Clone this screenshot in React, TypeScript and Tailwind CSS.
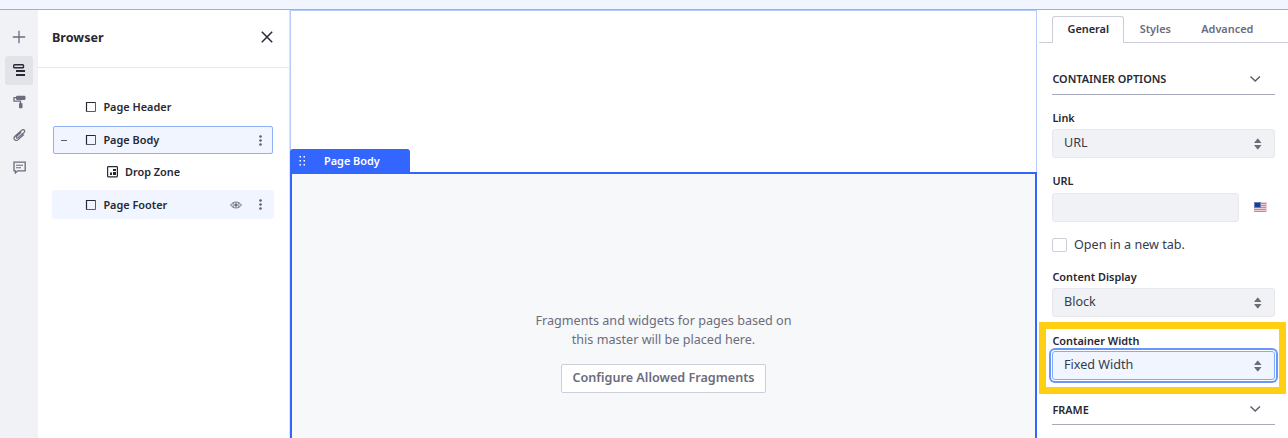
import React from "react";

const label = "text-[10.9px] font-semibold leading-[14px] text-[#272833] whitespace-nowrap";

function SquareIcon() {
  return (
    <svg width="12" height="12" viewBox="0 0 12 12" fill="none" className="block shrink-0">
      <path d="M1.500 11V1.500H11" stroke="#272833" strokeWidth="1.200" />
      <path d="M1 10.500h9.500V1" stroke="#5b5c6b" strokeWidth="1" />
    </svg>
  );
}

function Dots() {
  return (
    <svg width="4" height="12" viewBox="0 0 4 12" fill="#5c5d6e" className="block shrink-0">
      <circle cx="1.500" cy="1.500" r="1.300" />
      <circle cx="1.500" cy="5.500" r="1.300" />
      <circle cx="1.500" cy="9.500" r="1.300" />
    </svg>
  );
}

function Eye() {
  return (
    <svg width="12" height="8" viewBox="0 0 12 8" fill="none" stroke="#6b6c7e" className="block shrink-0">
      <path d="M.6 4C3 .1 9 .1 11.4 4 9 7.900 3 7.900.6 4Z" />
      <circle cx="6" cy="4" r="1.700" fill="#6b6c7e" stroke="none" />
      <path d="M3.700 2.200c-.9 1.200-.9 2.400 0 3.600M8.300 2.200c.9 1.200.9 2.400 0 3.600" strokeWidth=".8" />
    </svg>
  );
}

function Chevron() {
  return (
    <svg width="12" height="8" viewBox="0 0 12 8" fill="none" stroke="#5b5c6b" strokeWidth="1.400" className="block">
      <path d="m1.500 1.400 4.700 4.700 4.700-4.700" />
    </svg>
  );
}

function Select({ value, focused = false }: { value: string; focused?: boolean }) {
  return (
    <div
      className={
        "flex h-[29px] w-[223px] items-center justify-between rounded-[3px] border pl-[11px] pr-[12px] " +
        (focused
          ? "border-[#80acff] bg-[#f0f5ff] shadow-[0_0_0_1px_#ffffff,0_0_0_3px_#6b95f8]"
          : "border-[#e7e7ed] bg-[#f1f2f5]")
      }
    >
      <span className="pb-[2px] text-[12.6px] leading-[18px] text-[#393a4a]">{value}</span>
      <svg width="8" height="12" viewBox="0 0 8 12" fill="#6b6c7e" className="block">
        <path d="M0 5 3.200.9q.6-.7 1.200 0L7.500 5ZM0 7h7.500L4.400 11.100q-.6.7-1.200 0Z" />
      </svg>
    </div>
  );
}

function Section({ title, chevronTop = "pt-[3px]" }: { title: string; chevronTop?: string }) {
  return (
    <div className="flex h-[23px] w-[223px] justify-between border-b border-[#a7a9bc] pr-[14px]">
      <span className={label + " pl-[0.4px]"}>{title}</span>
      <span className={chevronTop}><Chevron /></span>
    </div>
  );
}

function Flag() {
  return (
    <svg width="13" height="10" viewBox="0 0 13 10" className="-mt-[2px] block">
      <path fill="#eccfd2" d="M0 0h13v10H0z" />
      <path fill="#d98288" d="M6 1h6v1H6zM6 3h6v1H6zM6 5h6v1H6zM0 7h12v1H0zM0 9h12v1H0z" />
      <path fill="#6c7fb5" d="M0 0h7v6H0z" />
      <path fill="#173d94" d="M1 1h5v4H1z" />
    </svg>
  );
}

function Rail() {
  return (
    <nav className="flex w-[38px] shrink-0 flex-col items-center bg-[#f1f2f5] pt-[13px] text-[#6b6c7e]">
      <div className="flex h-7 w-7 items-center justify-center">
        <svg width="14" height="14" viewBox="0 0 14 14" stroke="currentColor" strokeWidth="1.300"><path d="M7 .8v12.400M.8 7h12.400" /></svg>
      </div>
      <div className="mt-[5px] flex h-[29px] w-7 items-center justify-center rounded-[3px] bg-[#e2e3e8] pb-px">
        <svg width="12" height="12" viewBox="0 0 12 12" fill="none" stroke="#272833">
          <rect x=".7" y=".7" width="9.800" height="3" rx=".8" strokeWidth="1.400" />
          <path d="M3 7H12M3 11H12" strokeWidth="2" />
        </svg>
      </div>
      <div className="mt-[3px] flex h-7 w-7 items-center justify-center">
        <svg width="13" height="14" viewBox="0 0 13 14" fill="none" stroke="currentColor">
          <rect x="3" y=".8" width="9.500" height="4.200" rx="1.200" fill="currentColor" stroke="none" />
          <path d="M3.500 2.600H1v3.600h6.500V9" strokeWidth="1.300" />
          <path d="M6 8.300h3.500v4.500q-1.700 1-3.500 0z" fill="currentColor" stroke="none" />
        </svg>
      </div>
      <div className="mt-[5px] flex h-7 w-7 items-center justify-center">
        <svg width="13" height="12" viewBox="0 0 13 12" fill="none" stroke="currentColor" strokeWidth="1.200" strokeLinecap="round">
          <path d="m7.900 3.600-4.200 3.700c-1.100 1 .2 2.400 1.300 1.500l5.800-5.100C12.700 2 10.900-.4 8.800 1.200L2.200 7C-.8 9.700 2.400 13 5.200 10.600L10.600 5.800" />
        </svg>
      </div>
      <div className="mt-[4px] flex h-7 w-7 items-center justify-center">
        <svg width="13" height="13" viewBox="0 0 13 13" fill="none" stroke="currentColor" strokeWidth="1.300">
          <path d="M1 1.100h11.200v8.800H4.600L2.400 12V9.900H1z" />
          <path d="M3 4.200h7M3 6.700h5" strokeWidth="1.100" />
        </svg>
      </div>
    </nav>
  );
}

function Browser() {
  const row = "flex items-center ";
  return (
    <aside className="w-[252px] shrink-0 border-r border-[#e2e4ea] bg-white">
      <header className="flex h-[58px] items-center justify-between border-b border-[#e7e7ed] pl-[14px] pr-[16px] pb-[3px]">
        <h1 className="pt-px text-[12.6px] font-bold leading-[18px] text-[#272833]">Browser</h1>
        <svg width="12" height="12" viewBox="0 0 12 12" stroke="#272833" strokeWidth="1.500"><path d="m.8.8 10.400 10.400M11.200.8.8 11.200" /></svg>
      </header>
      <div className="flex flex-col px-[14px] pt-[24px]">
        <div className={row + "h-[29px] gap-[6px] pl-[33.400px]"}>
          <SquareIcon /><span className={label}>Page Header</span>
        </div>
        <div className={row + "mt-[5px] ml-px h-[28px] w-[220px] gap-[6px] rounded-[2px] border border-[#8fb0f6] bg-[#f0f5ff] pl-[7px] pr-[9px]"}>
          <span className="mr-[12.400px] h-px w-[6px] bg-[#5c5d6e]" />
          <SquareIcon /><span className={label}>Page Body</span>
          <span className="ml-auto pt-px"><Dots /></span>
        </div>
        <div className={row + "mt-[3px] h-[29px] gap-[7px] pl-[55px]"}>
          <svg width="11" height="12" viewBox="0 0 11 12" fill="#272833" className="block">
            <rect x=".6" y=".6" width="9.800" height="10.300" rx=".8" fill="none" stroke="#272833" strokeWidth="1.200" />
            <path d="M6 3h3v2H6zM6 6h3v3H6zM3 6.500h2V9H3z" />
          </svg>
          <span className={label}>Drop Zone</span>
        </div>
        <div className={row + "mt-[4px] h-[29px] w-[222px] gap-[6px] rounded-[3px] bg-[#f0f5ff] pl-[33.400px] pr-[11px]"}>
          <SquareIcon /><span className={label}>Page Footer</span>
          <span className="ml-auto mr-[11px]"><Eye /></span>
          <span className="pt-px"><Dots /></span>
        </div>
      </div>
    </aside>
  );
}

function Canvas() {
  return (
    <main className="flex w-[747px] shrink-0 flex-col">
      <div className="flex h-[162px] items-end border border-b-0 border-[#b7cbfb] bg-white">
        <div className="-ml-px flex h-[23px] w-[120px] items-center rounded-t-[3px] bg-[#3366ff] pl-[9px]">
          <svg width="7" height="10" viewBox="0 0 7 10" fill="#fff" className="block">
            <path d="M.5 0h1.500v1.500H.5zM4.500 0H6v1.500H4.500zM.5 4h1.500v1.500H.5zM4.500 4H6v1.500H4.500zM.5 8h1.500v1.500H.5zM4.500 8H6v1.500H4.500z" />
          </svg>
          <span className="ml-[18px] text-[10.9px] font-semibold leading-[14px] text-white">Page Body</span>
        </div>
      </div>
      <section className="flex grow flex-col items-center border-x-2 border-t-2 border-[#3366ff] bg-[#f7f8fa] pt-[137px] text-[12.6px] text-[#6b6c7e]">
        <p className="text-center leading-[19px]">Fragments and widgets for pages based on<br />this master will be placed here.</p>
        <button className="mt-[15px] h-[29px] w-[205px] whitespace-nowrap rounded-[2px] border border-[#cdced9] bg-white pb-[2px] font-semibold leading-[18px]">Configure Allowed Fragments</button>
      </section>
    </main>
  );
}

function Settings() {
  const tab = "flex items-center justify-center text-[10.9px] font-semibold leading-[14px] ";
  return (
    <aside className="relative flex grow flex-col bg-white">
      <div className="ml-[2px] flex h-[33px] border-b border-[#cdced9] pl-[13px] pt-[6px]">
        <div className={tab + "h-[27px] w-[72px] rounded-t-[3px] border border-b-0 border-[#cdced9] bg-white pb-[3px] pl-[0.6px] text-[#272833]"}>General</div>
        <div className={tab + "h-[27px] w-[62px] pb-px pl-[0.6px] text-[#6b6c7e]"}>Styles</div>
        <div className={tab + "h-[27px] w-[82px] pb-px pl-[0.6px] text-[#6b6c7e]"}>Advanced</div>
      </div>
      <div className="flex flex-col items-start pl-[15px] pt-[29px]">
        <Section title="CONTAINER OPTIONS" />
        <span className={label + " mb-[4px] mt-[16px] pl-[0.4px]"}>Link</span>
        <Select value="URL" />
        <span className={label + " mb-[5px] mt-[16px] pl-[0.4px]"}>URL</span>
        <div className="flex items-center gap-[15px]">
          <div className="h-[29px] w-[187px] rounded-[3px] border border-[#e7e7ed] bg-[#f1f2f5]" />
          <Flag />
        </div>
        <div className="mt-[14px] flex h-[18px] items-center gap-[7px]">
          <span className="-mt-px h-[14px] w-[15px] rounded-[2px] border border-[#cdced9] bg-white" />
          <span className="text-[12.6px] leading-[18px] text-[#393a4a]">Open in a new tab.</span>
        </div>
        <span className={label + " mb-[4px] mt-[16px] pl-[0.4px]"}>Content Display</span>
        <Select value="Block" />
        <span className={label + " mb-[3px] mt-[17px] pl-[0.4px]"}>Container Width</span>
        <Select value="Fixed Width" focused />
        <div className="mt-[22px] pt-px [&>div]:h-[22px]"><Section title="FRAME" chevronTop="pt-[2px]" /></div>
      </div>
      <div className="pointer-events-none absolute left-[2px] top-[312px] h-[72px] w-[247px] border-[7px] border-[#ffcf14]" />
    </aside>
  );
}

export default function App() {
  return (
    <div className="flex h-[438px] w-[1288px] flex-col overflow-hidden bg-white font-['Noto_Sans',sans-serif]">
      <div className="h-[10px] shrink-0 border-b border-[#8fb0f6] bg-[#f0f5ff]" />
      <div className="flex min-h-0 grow">
        <Rail />
        <Browser />
        <Canvas />
        <Settings />
      </div>
    </div>
  );
}
